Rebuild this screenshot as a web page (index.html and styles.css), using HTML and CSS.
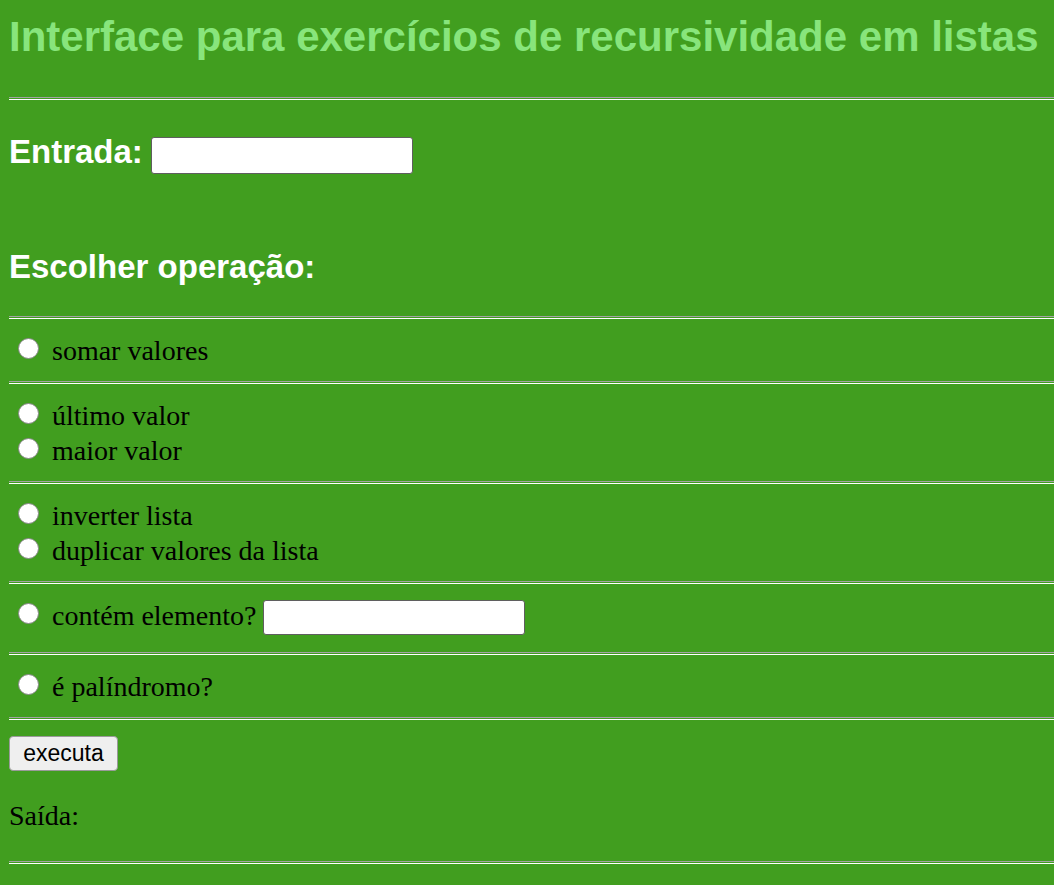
FILE: index.html
```html
<!DOCTYPE html>
<html lang="pt">
<head>
<meta charset="utf-8">
<title>Interface para exercícios de recursividade em listas</title>
<link rel="stylesheet" href="styles.css">
</head>
<body>
<h1 class="title">Interface para exercícios de recursividade em listas</h1>
<hr class="rule rule-top">
<div class="entry-row">
  <span class="heading">Entrada:</span>
  <input class="field field-entry" type="text">
</div>
<div class="heading choose">Escolher operação:</div>
<hr class="rule rule-choose">
<div class="group">
  <label class="option"><input class="radio" type="radio" name="op"><span class="opt-text">somar valores</span></label>
</div>
<hr class="rule">
<div class="group">
  <label class="option"><input class="radio" type="radio" name="op"><span class="opt-text">último valor</span></label>
  <label class="option"><input class="radio" type="radio" name="op"><span class="opt-text">maior valor</span></label>
</div>
<hr class="rule">
<div class="group">
  <label class="option"><input class="radio" type="radio" name="op"><span class="opt-text">inverter lista</span></label>
  <label class="option"><input class="radio" type="radio" name="op"><span class="opt-text">duplicar valores da lista</span></label>
</div>
<hr class="rule">
<div class="group">
  <label class="option option-tall"><input class="radio" type="radio" name="op"><span class="opt-text">contém elemento?</span><input class="field field-elem" type="text"></label>
</div>
<hr class="rule">
<div class="group">
  <label class="option"><input class="radio" type="radio" name="op"><span class="opt-text">é palíndromo?</span></label>
</div>
<hr class="rule">
<button class="run" type="button">executa</button>
<div class="output">Saída:</div>
<hr class="rule">
</body>
</html>
```
FILE: styles.css
```css
html, body {
  background: #419e1f;
}
body {
  margin: 0;
  padding: 13px 0 0 9px;
  font-family: "Liberation Serif", "Times New Roman", serif;
  font-size: 28px;
  color: #000;
}
.title {
  margin: 0;
  font-family: "Liberation Sans", Arial, sans-serif;
  font-weight: bold;
  font-size: 42px;
  line-height: 48px;
  color: #88e57c;
  white-space: nowrap;
}
.rule {
  display: block;
  margin: 0;
  height: 1px;
  border: 0;
  border-top: 1px solid #a3a3a3;
  border-bottom: 1px solid #ffffff;
  background: transparent;
}
.rule-top {
  margin-top: 36px;
}
.entry-row {
  display: flex;
  align-items: flex-start;
  margin-top: 32px;
}
.heading {
  font-family: "Liberation Sans", Arial, sans-serif;
  font-weight: bold;
  font-size: 33px;
  line-height: 40px;
  color: #fff;
}
.field {
  box-sizing: border-box;
  width: 262px;
  border: 1px solid #5f5f5f;
  border-radius: 3px;
  background: #fff;
  padding: 0 4px;
  font-size: 16px;
  font-family: "Liberation Sans", Arial, sans-serif;
  margin: 0;
}
.field-entry {
  height: 37px;
  margin-top: 5px;
  margin-left: 8px;
}
.choose {
  margin-top: 73px;
}
.rule-choose {
  margin-top: 29px;
}
.group {
  display: flex;
  flex-direction: column;
  padding: 16px 0 11px;
}
.option {
  display: flex;
  align-items: flex-start;
  height: 35px;
}
.option-tall {
  height: 41px;
}
.radio {
  appearance: none;
  -webkit-appearance: none;
  box-sizing: border-box;
  width: 21px;
  height: 21px;
  margin: 3px 13px 0 9px;
  border: 1.5px solid #888888;
  border-radius: 50%;
  background: #fff;
  flex: none;
}
.opt-text {
  line-height: 32px;
  white-space: nowrap;
}
.field-elem {
  height: 35px;
  margin-left: 7px;
}
.run {
  display: block;
  box-sizing: border-box;
  width: 109px;
  height: 35px;
  margin: 16px 0 0 0;
  padding: 0;
  background: #efefef;
  border: 1px solid #9a9a9a;
  border-radius: 4px;
  font-family: "Liberation Sans", Arial, sans-serif;
  font-size: 23px;
  color: #000;
}
.output {
  margin-top: 29px;
  line-height: 32px;
  margin-bottom: 29px;
}
```
